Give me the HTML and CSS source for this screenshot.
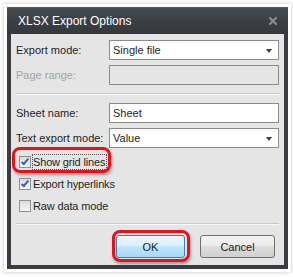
FILE: index.html
```html
<!DOCTYPE html>
<html>
<head>
    <title>XLSX Export Options</title>
    <link rel="stylesheet" href="styles.css">
</head>
<body>
    <div class="dialog">
        <div class="titlebar">
            <span class="title">XLSX Export Options</span>
            <svg class="close" width="8" height="8" viewBox="0 0 8 8">
                <path d="M1 1 L7 7 M7 1 L1 7" stroke="#8c8f94" stroke-width="2" stroke-linecap="square"/>
            </svg>
        </div>

        <div class="content">
            <div class="row">
                <label class="label">Export mode:</label>
                <div class="field combo">Single file<span class="arrow"></span></div>
            </div>
            <div class="row">
                <label class="label disabled">Page range:</label>
                <div class="field empty"></div>
            </div>

            <div class="separator"></div>

            <div class="row">
                <label class="label">Sheet name:</label>
                <div class="field">Sheet</div>
            </div>
            <div class="row">
                <label class="label">Text export mode:</label>
                <div class="field combo">Value<span class="arrow"></span></div>
            </div>

            <div class="check-row">
                <span class="checkbox checked"></span>
                <span class="check-text focused">Show grid lines</span>
            </div>
            <div class="check-row">
                <span class="checkbox checked"></span>
                <span class="check-text">Export hyperlinks</span>
            </div>
            <div class="check-row">
                <span class="checkbox"></span>
                <span class="check-text">Raw data mode</span>
            </div>

            <div class="separator bottom"></div>

            <div class="button-group">
                <button class="btn-ok">OK</button>
                <button class="btn-cancel">Cancel</button>
            </div>
        </div>
    </div>

    <!-- red annotation marks drawn over the dialog -->
    <div class="highlight hl-grid"></div>
    <div class="highlight hl-ok"></div>
</body>
</html>
```

FILE: styles.css
```css
body {
    margin: 0;
    position: relative;
    width: 293px;
    height: 277px;
    background: #ffffff;
    font-family: "Liberation Sans", Arial, sans-serif;
    font-size: 11px;
    color: #1e1e1e;
    overflow: hidden;
}
.dialog {
    margin: 7px 0 0 7px;
    width: 281px;
    height: 262px;
    background: #3a3c41;
    box-shadow: 0 0 0 3px #ffffff, 0 0 4px 3px rgba(0,0,0,0.25);
    display: flex;
    flex-direction: column;
}
.titlebar {
    height: 27px;
    flex: none;
    display: flex;
    align-items: center;
    justify-content: space-between;
    padding: 0 11px;
    background: linear-gradient(#5b5e64 0, #45484d 2px, #3a3d42 60%, #34373b 100%);
}
.title {
    color: #ffffff;
    font-size: 12px;
    padding-top: 1px;
}
.close {
    margin-top: 1px;
}
.content {
    flex: 1;
    margin: 0 4px 4px 4px;
    background: #e5e5e5;
    padding: 6px 5px 0 5px;
}
.row {
    display: flex;
    align-items: center;
    height: 20px;
    margin-bottom: 5px;
}
.label {
    width: 93px;
    flex: none;
}
.label.disabled {
    color: #a3a3a3;
}
.field {
    flex: 1;
    height: 18px;
    box-sizing: content-box;
    border: 1px solid #8a8a8a;
    background: #ffffff;
    display: flex;
    align-items: center;
    padding-left: 3px;
    position: relative;
}
.field.empty {
    background: #e5e5e5;
}
.arrow {
    position: absolute;
    right: 6px;
    top: 8px;
    width: 0;
    height: 0;
    border-left: 3.5px solid transparent;
    border-right: 3.5px solid transparent;
    border-top: 4px solid #3c3c3c;
}
.separator {
    margin: 8px 0 8px 0;
    border-top: 1px solid #c8c8c8;
    border-bottom: 1px solid #fafafa;
}
.check-row {
    display: flex;
    align-items: center;
    height: 22px;
    padding-left: 3px;
}
.row + .check-row {
    margin-top: -2px;
}
.checkbox {
    width: 10px;
    height: 10px;
    border: 1px solid #8e8f8f;
    background: linear-gradient(#dcdcdc, #f6f6f6);
    position: relative;
    flex: none;
}
.checkbox.checked::after {
    content: "";
    position: absolute;
    left: 3px;
    top: 0px;
    width: 2px;
    height: 6px;
    border-right: 2px solid #2f63b5;
    border-bottom: 2px solid #2f63b5;
    transform: rotate(40deg);
}
.check-text {
    margin-left: 1px;
    padding: 1px 1px 1px 0;
    border: 1px dotted transparent;
    letter-spacing: -0.15px;
}
.check-text.focused {
    border-color: #505050;
}
.separator.bottom {
    margin: 6px 0 0 0;
}
.button-group {
    display: flex;
    justify-content: flex-end;
    gap: 15px;
    padding: 10px 4px 0 0;
}
button {
    height: 23px;
    font-family: "Liberation Sans", Arial, sans-serif;
    font-size: 11px;
    color: #1e1e1e;
    border-radius: 3px;
    padding: 0;
}
.btn-ok {
    width: 69px;
    border: 1px solid #3c7fb1;
    background: linear-gradient(#eaf6fd 0%, #d9f0fc 50%, #bee6fd 50%, #a7d9f5 100%);
}
.btn-cancel {
    width: 75px;
    border: 1px solid #707070;
    background: linear-gradient(#f2f2f2 0%, #ebebeb 50%, #dddddd 50%, #cfcfcf 100%);
}
.highlight {
    position: absolute;
    border: 3px solid #e3121b;
    border-radius: 8px;
    box-shadow: 1px 2px 3px rgba(0,0,0,0.35);
}
.hl-grid {
    left: 12px;
    top: 147px;
    width: 93px;
    height: 20px;
}
.hl-ok {
    left: 112px;
    top: 230px;
    width: 72px;
    height: 26px;
}
```
